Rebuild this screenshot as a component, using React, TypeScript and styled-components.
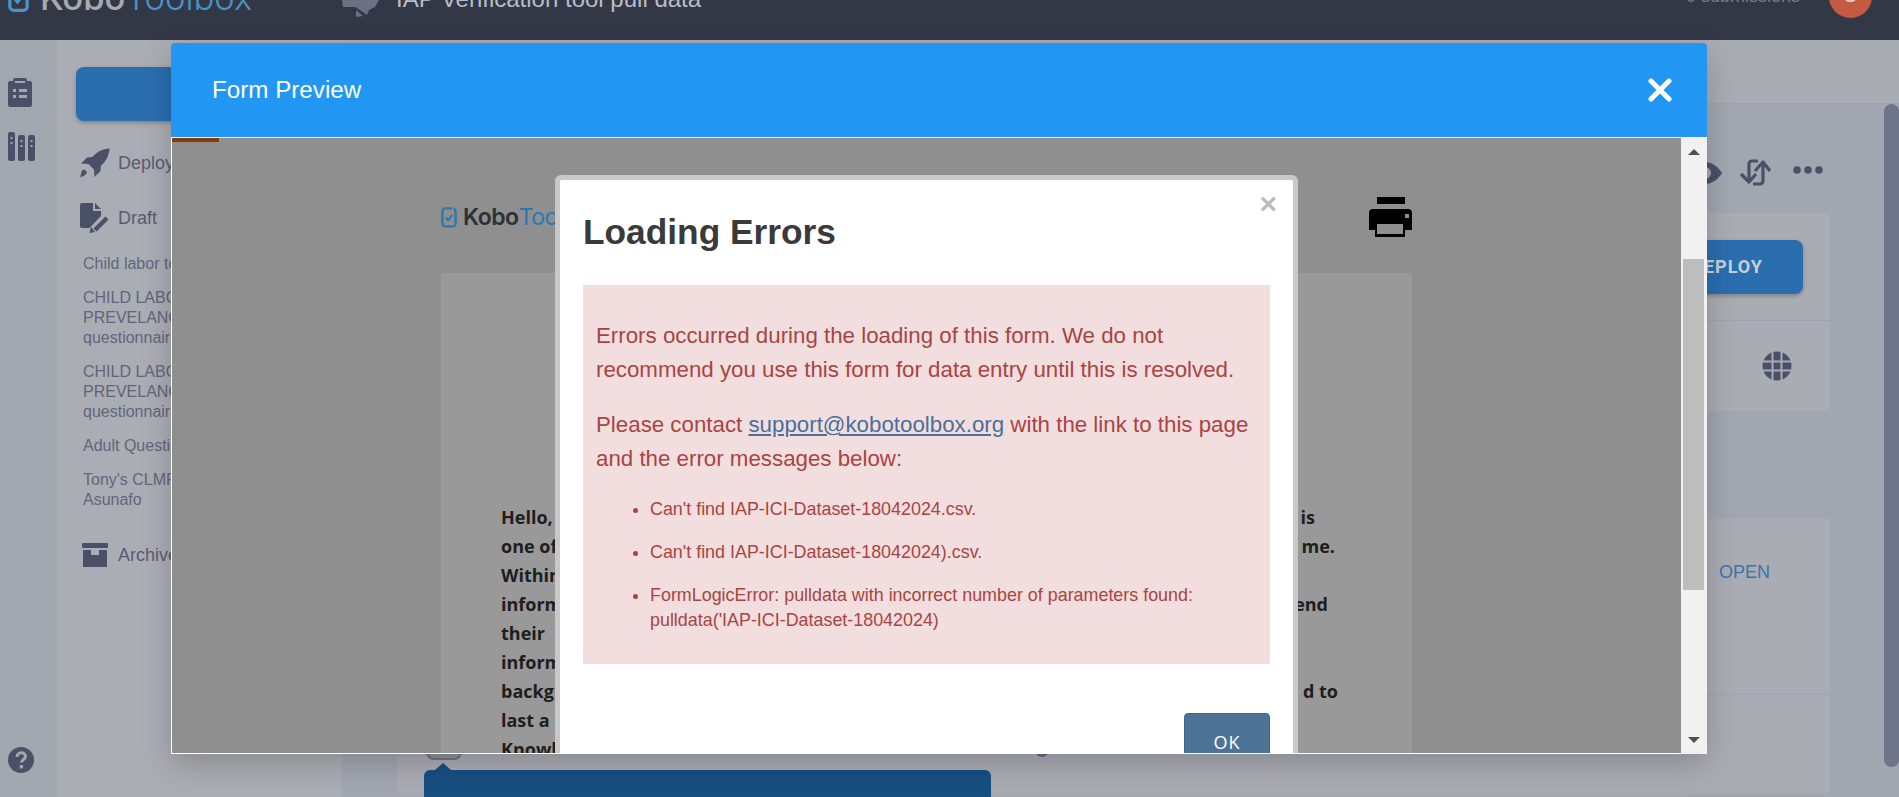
import React from 'react'
import styled, { createGlobalStyle } from 'styled-components'

const GlobalStyle = createGlobalStyle`
  html, body {
    margin: 0;
    padding: 0;
    overflow: hidden;
    font-family: "Liberation Sans", Arial, sans-serif;
  }
  * {
    box-sizing: border-box;
  }
`

const Page = styled.div`
  position: relative;
  width: 1899px;
  height: 797px;
  overflow: hidden;
  display: flex;
  flex-direction: column;
  background: #a2a6b0;
`

const TopBar = styled.header`
  height: 40px;
  flex: none;
  display: flex;
  align-items: flex-start;
  background: #333847;
  overflow: hidden;
  position: relative;
  padding-left: 8px;
`

const Brand = styled.div`
  display: flex;
  align-items: center;
  width: 334px;
  height: 48px;
  margin-top: -26px;
  font-family: Inter, sans-serif;
  font-size: 34.5px;
  font-weight: 500;
  line-height: 48px;
  color: #a8aab0;

  svg {
    margin-right: 11px;
  }

  span {
    color: #4b93c9;
    font-weight: 300;
  }
`

const ProjectIcon = styled.div`
  width: 44px;
  height: 17px;
  color: #6b7083;
`

const ProjectTitle = styled.div`
  margin: -15px 0 0 10px;
  flex: 1;
  font-size: 24px;
  line-height: 27px;
  color: #b9bcc5;
`

const Submissions = styled.div`
  margin-top: -14px;
  font-size: 18px;
  line-height: 20px;
  color: #777c8c;
`

const Avatar = styled.div`
  width: 43px;
  height: 43px;
  margin: -25px 27px 0 29px;
  border-radius: 50%;
  background: #c35b42;
  color: #e9c9c0;
  font-size: 24px;
  line-height: 38px;
  text-align: center;
`

const Workspace = styled.div`
  flex: 1;
  display: flex;
  min-height: 0;
`

const Rail = styled.nav`
  width: 57px;
  flex: none;
  display: flex;
  flex-direction: column;
  align-items: flex-start;
  padding: 38px 0 24px 8px;
  gap: 25px;
  background: #a3a7af;
  color: #4a5068;
`

const HelpSlot = styled.div`
  margin-top: auto;
  height: 26px;
`

const Sidebar = styled.aside`
  width: 285px;
  flex: none;
  padding: 27px 0 0 19px;
  background: #abadb4;
`

const NewButton = styled.div`
  width: 240px;
  height: 54px;
  margin-bottom: 27px;
  border-radius: 8px;
  background: #2a6eb0;
  box-shadow: 0 2px 4px rgba(0, 0, 0, 0.25);
`

const NavHeading = styled.div<{ $gap: number }>`
  display: flex;
  align-items: center;
  gap: 8px;
  height: 30px;
  margin-bottom: ${(p) => p.$gap}px;
  padding-left: 4px;
  font-size: 18px;
  color: #565c70;
`

const NavIcon = styled.span`
  width: 30px;
  height: 30px;
  flex: none;
  display: flex;
  align-items: center;
  justify-content: center;
  color: #4a5068;
`

const DraftList = styled.ul`
  list-style: none;
  margin: 0 0 30px 0;
  padding: 0 0 0 7px;
`

const DraftItem = styled.li`
  width: 200px;
  margin-bottom: 14px;
  font-size: 16px;
  line-height: 20px;
  white-space: nowrap;
  color: #60667a;
`

const Main = styled.main`
  flex: 1;
  min-width: 0;
  display: flex;
  flex-direction: column;
`

const MainHeader = styled.div`
  height: 64px;
  flex: none;
  background: #aaacb3;
  border-bottom: 1px solid #a0a3ab;
`

const MainBody = styled.div`
  flex: 1;
  display: flex;
  min-height: 0;
`

const Content = styled.div`
  flex: 1;
  padding: 0 54px 0 55px;
`

const ActionRow = styled.div`
  height: 109px;
  display: flex;
  align-items: center;
  justify-content: flex-end;
  gap: 21px;
  padding: 55px 7px 27px 0;
  color: #4a5068;

  svg:first-child {
    margin-right: -4px;
  }
`

const Card = styled.section<{ $gap: number }>`
  margin-bottom: ${(p) => p.$gap}px;
  background: #aaacb3;
`

const CardRow = styled.div<{ $height: number; $line?: boolean }>`
  height: ${(p) => p.$height}px;
  display: flex;
  justify-content: flex-end;
  align-items: center;
  border-bottom: ${(p) => (p.$line ? '1px solid #a0a3ab' : 'none')};
`

const DeployButton = styled.div`
  width: 170px;
  height: 54px;
  margin-right: 27px;
  padding-right: 40px;
  border-radius: 8px;
  background: #2a6eb0;
  box-shadow: 0 2px 4px rgba(0, 0, 0, 0.25);
  color: #c9cfd9;
  font-family: Roboto, sans-serif;
  font-size: 18px;
  font-weight: 700;
  letter-spacing: 1px;
  line-height: 54px;
  text-align: right;
`

const GlobeSlot = styled.div`
  margin-right: 38px;
  color: #4a5068;
  display: flex;
`

const OpenLink = styled.div`
  align-self: flex-start;
  margin: 42px 60px 0 0;
  font-size: 18px;
  line-height: 22px;
  color: #3b74b0;
`

const PageScroll = styled.div`
  width: 15px;
  flex: none;
  margin-bottom: 30px;
  border-radius: 8px;
  background: #6f7589;
`

const Tooltip = styled.div`
  position: absolute;
  left: 424px;
  top: 770px;
  width: 567px;
  height: 40px;
  border-radius: 6px 6px 0 0;
  background: #174f80;

  &::before {
    content: '';
    position: absolute;
    left: 11px;
    top: -7px;
    border-left: 8px solid transparent;
    border-right: 8px solid transparent;
    border-bottom: 7px solid #174f80;
  }
`

const TogglePeek = styled.div`
  position: absolute;
  left: 426px;
  top: 744px;
  width: 36px;
  height: 16px;
  border: 2px solid #70747f;
  border-radius: 8px;
  background: #8f929c;
`

const DotPeek = styled.div`
  position: absolute;
  left: 1035px;
  top: 743px;
  width: 14px;
  height: 14px;
  border-radius: 50%;
  background: #666b7c;
`

const Modal = styled.div`
  position: absolute;
  left: 171px;
  top: 43px;
  width: 1536px;
  height: 711px;
  display: flex;
  flex-direction: column;
  border-radius: 4px 4px 0 0;
  box-shadow: 0 10px 30px rgba(0, 0, 0, 0.2);
`

const ModalHeader = styled.div`
  height: 94px;
  flex: none;
  display: flex;
  align-items: center;
  justify-content: space-between;
  padding: 0 35px 0 41px;
  border-radius: 4px 4px 0 0;
  background: #2196f3;
  color: #fff;
  font-size: 24.2px;
`

const ModalBody = styled.div`
  flex: 1;
  min-height: 0;
  display: flex;
  border-top: 1px solid #fff;
`

const Frame = styled.div`
  position: relative;
  flex: 1;
  min-width: 0;
  overflow: hidden;
  background: #8f8f8f;
  border-left: 1px solid #fff;
  border-bottom: 1px solid #fff;
`

const Progress = styled.div`
  position: absolute;
  left: 0;
  top: 0;
  width: 47px;
  height: 4px;
  background: #8a3a0a;
`

const Sheet = styled.div`
  width: 971px;
  margin-left: 269px;
`

const SheetHeader = styled.div`
  height: 135px;
  display: flex;
  align-items: flex-start;
  justify-content: space-between;
  padding-top: 59px;
`

const SheetBrand = styled.div`
  display: flex;
  align-items: center;
  height: 40px;
  font-family: Inter, sans-serif;
  font-size: 23px;
  font-weight: 600;
  letter-spacing: -0.5px;
  color: #2e3038;

  svg {
    margin-right: 6px;
  }

  span {
    color: #2c78b0;
    font-weight: 400;
  }
`

const Paper = styled.div`
  background: #999;
  padding: 230px 0 0 60px;
  font-family: "Open Sans", sans-serif;
  font-size: 18px;
  font-weight: 700;
  line-height: 29px;
  color: #1e1e1e;
`

const PaperLine = styled.div`
  display: flex;
  justify-content: space-between;
`

const PaperTail = styled.span<{ $end: number }>`
  margin-right: ${(p) => p.$end}px;
`

const Dialog = styled.div`
  position: absolute;
  left: 383px;
  top: 37px;
  width: 743px;
  padding: 5px 23px;
  border: 5px solid #c8c8c8;
  border-radius: 6px;
  background: #fff;
  background-clip: padding-box;
`

const DialogClose = styled.div`
  position: absolute;
  right: 16px;
  top: 10px;
  font-size: 30px;
  font-weight: 700;
  line-height: 28px;
  color: #bcbcbc;
`

const DialogTitle = styled.h2`
  margin: 28px 0 34px 0;
  font-size: 35.3px;
  font-weight: 700;
  line-height: 38px;
  color: #3a3a3a;
`

const Alert = styled.div`
  padding: 34px 13px 31px 13px;
  background: #f2dede;
  color: #a94442;
`

const AlertText = styled.p`
  margin: 0 0 21px 0;
  font-size: 22.3px;
  line-height: 34px;

  a {
    color: #4b6f9b;
  }
`

const ErrorList = styled.ul`
  margin: 0;
  padding: 0 0 0 54px;
  font-size: 17.9px;
  line-height: 25px;

  li {
    margin-bottom: 18px;
  }

  li:last-child {
    margin-bottom: 0;
  }
`

const NoBreak = styled.span`
  white-space: nowrap;
`

const DialogFooter = styled.div`
  display: flex;
  justify-content: flex-end;
  margin-top: 49px;
`

const OkButton = styled.div`
  width: 86px;
  height: 58px;
  border: 1px solid #3f6585;
  border-radius: 4px;
  background: #4d7396;
  color: #fff;
  font-family: "Open Sans", sans-serif;
  font-size: 18px;
  letter-spacing: 1px;
  line-height: 56px;
  text-align: center;
`

const ScrollBar = styled.div`
  position: relative;
  width: 26px;
  flex: none;
  background: #f1f1f1;
`

const ScrollThumb = styled.div`
  position: absolute;
  left: 2px;
  right: 3px;
  top: 121px;
  height: 331px;
  background: #bdbdbd;
`

const ScrollArrow = styled.div<{ $down?: boolean }>`
  position: absolute;
  left: 7px;
  ${(p) => (p.$down ? 'bottom: 11px;' : 'top: 11px;')}
  border-left: 6px solid transparent;
  border-right: 6px solid transparent;
  ${(p) => (p.$down ? 'border-top: 6px solid #505050;' : 'border-bottom: 6px solid #505050;')}
`

const LogoMark = ({ width, height, color }: { width: number; height: number; color: string }) => (
  <svg width={width} height={height} viewBox="0 0 16 22" fill="none" stroke={color} strokeWidth="2.4">
    <path d="M11 2.400H4.400a3 3 0 0 0-3 3v12a3 3 0 0 0 3 3h7.200a3 3 0 0 0 3-3V5.400a3 3 0 0 0-2-2.800" />
    <path d="M4.800 11.400l2.400 3 4-5.400" strokeWidth="2" />
  </svg>
)

const ClipboardIcon = () => (
  <svg width="24" height="29" viewBox="0 0 24 29">
    <path
      fill="currentColor"
      fillRule="evenodd"
      d="M7 0h10a2 2 0 0 1 2 2v1h3a2 2 0 0 1 2 2v22a2 2 0 0 1-2 2H2a2 2 0 0 1-2-2V5a2 2 0 0 1 2-2h3V2a2 2 0 0 1 2-2zM7 3v2h10V3zM5 11v3h3v-3zm6 0v3h8v-3zM5 17v3h3v-3zm6 0v3h8v-3z"
    />
  </svg>
)

const LibraryIcon = () => (
  <svg width="27" height="29" viewBox="0 0 27 29">
    <path
      fill="currentColor"
      fillRule="evenodd"
      d="M2 0h3a2 2 0 0 1 2 2v25a2 2 0 0 1-2 2H2a2 2 0 0 1-2-2V2a2 2 0 0 1 2-2zm.5 5v2h2V5zm0 5v2h2v-2zM12 3h3a2 2 0 0 1 2 2v22a2 2 0 0 1-2 2h-3a2 2 0 0 1-2-2V5a2 2 0 0 1 2-2zm.5 5v2h2V8zm0 5v2h2v-2zM22 3h3a2 2 0 0 1 2 2v22a2 2 0 0 1-2 2h-3a2 2 0 0 1-2-2V5a2 2 0 0 1 2-2zm.5 5v2h2V8zm0 5v2h2v-2z"
    />
  </svg>
)

const HelpIcon = () => (
  <svg width="26" height="26" viewBox="0 0 26 26">
    <circle cx="13" cy="13" r="13" fill="currentColor" />
    <path d="M9 10c0-5.500 8.500-5.500 8.500-.5 0 3-4 3-4 6" fill="none" stroke="#a3a7af" strokeWidth="3" />
    <rect x="11.800" y="18" width="3.200" height="3.400" fill="#a3a7af" />
  </svg>
)

const RocketIcon = () => (
  <svg width="30" height="30" viewBox="0 0 30 30">
    <path
      fill="currentColor"
      d="M29.500.500c-7 .5-13 3.500-17 8.500l-5.500.5-6 6 7.500.5 5.500 5.500.5 7.500 6-6 .5-5.500c5-4 8-10 8.500-17z"
    />
    <path fill="currentColor" d="M2.500 22c2-1 5 1.500 4 3.500-.5 1-3.500 3-6 4 0-2.500 1-6.500 2-7.500z" />
  </svg>
)

const ProjectGlyph = () => (
  <svg width="37" height="17" viewBox="0 0 37 17">
    <path fill="currentColor" d="M0 0h37l-4 7-6 3-2 5-7-5-5-3H1z" />
    <path fill="currentColor" d="M14 10l7 6-7 1z" />
  </svg>
)

const DraftIcon = () => (
  <svg width="30" height="30" viewBox="0 0 30 30">
    <path fill="currentColor" d="M2 0h11v8h8v5L9.500 25H2a2 2 0 0 1-2-2V2a2 2 0 0 1 2-2z" />
    <path fill="currentColor" d="M15 0l6 6h-6z" />
    <path stroke="currentColor" strokeWidth="4.500" d="M27 15L15 27" />
    <path fill="currentColor" d="M11 24l4 5-5.500 1z" />
  </svg>
)

const ArchiveIcon = () => (
  <svg width="26" height="24" viewBox="0 0 26 24">
    <rect x="0" y="0" width="26" height="5" rx="1" fill="currentColor" />
    <path fill="currentColor" fillRule="evenodd" d="M1 7h24v17H1zM9 7v5h8V7z" />
  </svg>
)

const EyeIcon = () => (
  <svg width="34" height="22" viewBox="0 0 34 22">
    <path
      fill="currentColor"
      fillRule="evenodd"
      d="M17 0c8 0 14 6 17 11-3 5-9 11-17 11S3 16 0 11C3 6 9 0 17 0zm0 5a6 6 0 1 0 0 12 6 6 0 0 0 0-12z"
    />
  </svg>
)

const SyncIcon = () => (
  <svg width="33" height="27" viewBox="0 0 33 27" fill="none" stroke="currentColor" strokeWidth="3.200">
    <path d="M19 2h-6a3 3 0 0 0-3 3v17" />
    <path d="M2 15l8 8 7-8" strokeLinejoin="round" />
    <path d="M14 25h7a3 3 0 0 0 3-3V5" />
    <path d="M16 12l8-9 7 9" strokeLinejoin="round" />
  </svg>
)

const DotsIcon = () => (
  <svg width="30" height="16" viewBox="0 0 30 16">
    <circle cx="4" cy="5" r="3.800" fill="currentColor" />
    <circle cx="15" cy="5" r="3.800" fill="currentColor" />
    <circle cx="26" cy="5" r="3.800" fill="currentColor" />
  </svg>
)

const GlobeIcon = () => (
  <svg width="30" height="30" viewBox="0 0 30 30">
    <circle cx="15" cy="15" r="14.500" fill="currentColor" />
    <path d="M10.500 0v30M19.500 0v30M0 10.500h30M0 19.500h30" stroke="#aaacb3" strokeWidth="2" />
  </svg>
)

const CloseIcon = () => (
  <svg width="24" height="24" viewBox="0 0 24 24">
    <path d="M3 3l18 18M21 3L3 21" stroke="#fff" strokeWidth="5" strokeLinecap="round" />
  </svg>
)

const PrinterIcon = () => (
  <svg width="43" height="40" viewBox="0 0 43 40">
    <rect x="8" y="0" width="28" height="7" fill="#000" />
    <path
      fill="#000"
      fillRule="evenodd"
      d="M4 12h35a4 4 0 0 1 4 4v17h-7v7H6v-7H0V16a4 4 0 0 1 4-4zm4 15v10h26V27zM36 17v4h4v-4z"
    />
  </svg>
)

const draftNames = [
  ['Child labor tool'],
  ['CHILD LABOUR', 'PREVELANCE', 'questionnaire'],
  ['CHILD LABOUR', 'PREVELANCE', 'questionnaire'],
  ['Adult Questionnaire'],
  ["Tony's CLMFS", 'Asunafo']
]

const paperLines = [
  { head: 'Hello,', tail: 'is', end: 97 },
  { head: 'one of', tail: 'me.', end: 77 },
  { head: 'Within' },
  { head: 'information', tail: 'end', end: 84 },
  { head: 'their' },
  { head: 'information' },
  { head: 'background', tail: 'd to', end: 74 },
  { head: 'last a' },
  { head: 'Knowledge' }
]

const App = (): JSX.Element => {
  return (
    <Page>
      <GlobalStyle />
      <TopBar>
        <Brand>
          <LogoMark width={21} height={34} color="#4b93c9" />
          Kobo<span>Toolbox</span>
        </Brand>
        <ProjectIcon>
          <ProjectGlyph />
        </ProjectIcon>
        <ProjectTitle>IAP Verification tool pull data</ProjectTitle>
        <Submissions>0 submissions</Submissions>
        <Avatar>U</Avatar>
      </TopBar>
      <Workspace>
        <Rail>
          <ClipboardIcon />
          <LibraryIcon />
          <HelpSlot>
            <HelpIcon />
          </HelpSlot>
        </Rail>
        <Sidebar>
          <NewButton />
          <NavHeading $gap={25}>
            <NavIcon>
              <RocketIcon />
            </NavIcon>
            Deploy
          </NavHeading>
          <NavHeading $gap={21}>
            <NavIcon>
              <DraftIcon />
            </NavIcon>
            Draft
          </NavHeading>
          <DraftList>
            {draftNames.map((lines, i) => (
              <DraftItem key={i}>
                {lines.map((line) => (
                  <div key={line}>{line}</div>
                ))}
              </DraftItem>
            ))}
          </DraftList>
          <NavHeading $gap={0}>
            <NavIcon>
              <ArchiveIcon />
            </NavIcon>
            Archive
          </NavHeading>
        </Sidebar>
        <Main>
          <MainHeader />
          <MainBody>
            <Content>
              <ActionRow>
                <EyeIcon />
                <SyncIcon />
                <DotsIcon />
              </ActionRow>
              <Card $gap={108}>
                <CardRow $height={108} $line>
                  <DeployButton>DEPLOY</DeployButton>
                </CardRow>
                <CardRow $height={90}>
                  <GlobeSlot>
                    <GlobeIcon />
                  </GlobeSlot>
                </CardRow>
              </Card>
              <Card $gap={0}>
                <CardRow $height={176} $line>
                  <OpenLink>OPEN</OpenLink>
                </CardRow>
                <CardRow $height={98} />
              </Card>
            </Content>
            <PageScroll />
          </MainBody>
        </Main>
      </Workspace>
      <TogglePeek />
      <DotPeek />
      <Tooltip />
      <Modal>
        <ModalHeader>
          Form Preview
          <CloseIcon />
        </ModalHeader>
        <ModalBody>
          <Frame>
            <Progress />
            <Sheet>
              <SheetHeader>
                <SheetBrand>
                  <LogoMark width={16} height={22} color="#2c78b0" />
                  Kobo<span>Toolbox</span>
                </SheetBrand>
                <PrinterIcon />
              </SheetHeader>
              <Paper>
                {paperLines.map((line, i) => (
                  <PaperLine key={i}>
                    <span>{line.head}</span>
                    {line.tail && <PaperTail $end={line.end ?? 0}>{line.tail}</PaperTail>}
                  </PaperLine>
                ))}
              </Paper>
            </Sheet>
            <Dialog>
              <DialogClose>×</DialogClose>
              <DialogTitle>Loading Errors</DialogTitle>
              <Alert>
                <AlertText>
                  Errors occurred during the loading of this form. We do not recommend you use this form for data entry
                  until this is resolved.
                </AlertText>
                <AlertText>
                  Please contact <a href="#support">support@kobotoolbox.org</a> with the link to this page and the error
                  messages below:
                </AlertText>
                <ErrorList>
                  <li>Can't find IAP-ICI-Dataset-18042024.csv.</li>
                  <li>Can't find IAP-ICI-Dataset-18042024).csv.</li>
                  <li>
                    FormLogicError: pulldata with incorrect number of parameters found:{' '}
                    <NoBreak>pulldata('IAP-ICI-Dataset-18042024)</NoBreak>
                  </li>
                </ErrorList>
              </Alert>
              <DialogFooter>
                <OkButton>OK</OkButton>
              </DialogFooter>
            </Dialog>
          </Frame>
          <ScrollBar>
            <ScrollArrow />
            <ScrollThumb />
            <ScrollArrow $down />
          </ScrollBar>
        </ModalBody>
      </Modal>
    </Page>
  )
}

export default App
